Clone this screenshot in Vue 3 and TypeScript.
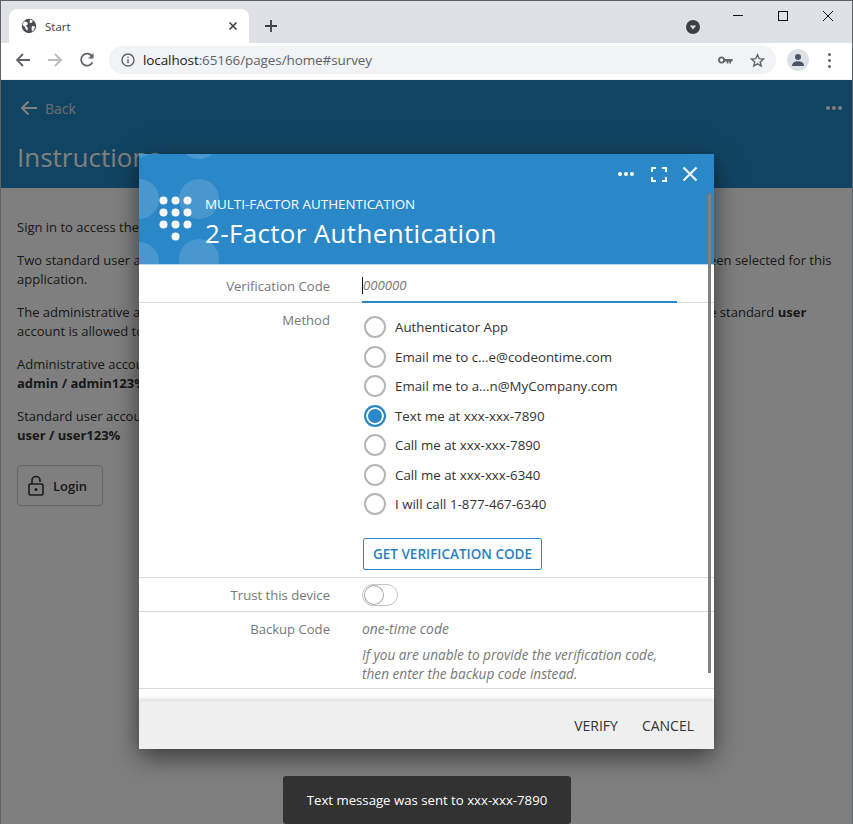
<script setup lang="ts">
const methods: { label: string; checked?: boolean }[] = [
  { label: 'Authenticator App' },
  { label: 'Email me to c...e@codeontime.com' },
  { label: 'Email me to a...n@MyCompany.com' },
  { label: 'Text me at xxx-xxx-7890', checked: true },
  { label: 'Call me at xxx-xxx-7890' },
  { label: 'Call me at xxx-xxx-6340' },
  { label: 'I will call 1-877-467-6340' },
]
</script>

<template>
  <div class="win">
    <div class="tabstrip">
      <div class="tab">
        <svg class="globe" width="16" height="16" viewBox="0 0 16 16">
          <circle cx="8" cy="8" r="7.2" fill="#4a4d51" />
          <path d="M3 3.5l3 .5 1 2-2 1.500 1.500 2 .5 3-2-1-1.500-3L1.500 7zM9 1.500l3 1.500-1.500 2-2-.5zM11 8l3 .5-1 3.500-2 1.500-.5-3z" fill="#fff" />
        </svg>
        <span class="tab-title">Start</span>
        <svg class="tab-x" width="10" height="10" viewBox="0 0 10 10"><path d="M1.500 1.500l7 7M8.500 1.500l-7 7" stroke="#3c4043" stroke-width="1.600" /></svg>
      </div>
      <svg class="plus" width="12" height="12" viewBox="0 0 12 12"><path d="M6 0v12M0 6h12" stroke="#3c4043" stroke-width="1.800" /></svg>
      <div class="strip-right">
        <svg class="drop" width="14" height="14" viewBox="0 0 14 14">
          <circle cx="7" cy="7" r="7" fill="#3c4043" />
          <path d="M3.800 5.400h6.400L7 9.400z" fill="#dee1e6" />
        </svg>
        <div class="winbtns">
          <svg width="12" height="12" viewBox="0 0 12 12"><path d="M1 5.500h10" stroke="#111" /></svg>
          <svg width="12" height="12" viewBox="0 0 12 12"><rect x="1.500" y="1.500" width="9" height="9" fill="none" stroke="#111" /></svg>
          <svg width="12" height="12" viewBox="0 0 12 12"><path d="M1 1l10 10M11 1L1 11" stroke="#111" /></svg>
        </div>
      </div>
    </div>
    <div class="toolbar">
      <svg class="nav" width="16" height="16" viewBox="0 0 16 16"><path d="M15 8H2M8 2L2 8l6 6" fill="none" stroke="#5f6368" stroke-width="1.800" /></svg>
      <svg class="nav" width="16" height="16" viewBox="0 0 16 16"><path d="M1 8h13M8 2l6 6-6 6" fill="none" stroke="#babcbe" stroke-width="1.800" /></svg>
      <svg class="nav" width="16" height="16" viewBox="0 0 16 16"><path d="M13.400 10.500A6 6 0 1 1 13 4.200" fill="none" stroke="#5f6368" stroke-width="1.800" /><path d="M14.500 1v5.400H9z" fill="#5f6368" /></svg>
      <div class="omnibox">
        <svg width="14" height="14" viewBox="0 0 14 14"><circle cx="7" cy="7" r="6" fill="none" stroke="#5f6368" stroke-width="1.400" /><path d="M7 6.200v4M7 3.700v1.400" stroke="#5f6368" stroke-width="1.400" /></svg>
        <span class="url"><span class="host">localhost</span>:65166/pages/home#survey</span>
        <svg class="key" width="15" height="9" viewBox="0 0 15 9"><circle cx="3.500" cy="4" r="2.600" fill="none" stroke="#5f6368" stroke-width="1.800" /><path d="M6 3h8.500v2.400h-1.500v2h-1.600v-2h-1v2H8.800v-2H6z" fill="#5f6368" /></svg>
        <svg class="star" width="15" height="15" viewBox="0 0 15 15"><path d="M7.500 1.800l1.700 3.900 4.200.4-3.200 2.800 1 4.100-3.700-2.200-3.700 2.200 1-4.100-3.200-2.800 4.200-.4z" fill="none" stroke="#5f6368" stroke-width="1.400" /></svg>
      </div>
      <div class="avatar">
        <svg width="14" height="14" viewBox="0 0 14 14"><circle cx="7" cy="4" r="3" fill="#4a5568" /><path d="M1 13c0-3.500 3-4.800 6-4.800s6 1.300 6 4.800z" fill="#4a5568" /></svg>
      </div>
      <div class="kebab"><i></i><i></i><i></i></div>
    </div>

    <div class="page">
      <div class="page-head">
        <div class="back">
          <svg width="18" height="16" viewBox="0 0 18 16"><path d="M17 8H2M8.500 1.500L2 8l6.500 6.500" fill="none" stroke="#fff" stroke-width="2" /></svg>
          <span>Back</span>
          <div class="more"><i></i><i></i><i></i></div>
        </div>
        <div class="page-title">Instructions</div>
      </div>
      <div class="page-body">
        <p>Sign in to access the application.</p>
        <p>Two standard user accounts and an administrative account were created and the multi-factor authentication has been selected for this application.</p>
        <p>The administrative account is allowed to use all of the authentication methods available in the application, while the standard <b>user</b> account is allowed to use only the authenticator app.</p>
        <p>Administrative account:<br /><b>admin / admin123%</b></p>
        <p>Standard user account:<br /><b>user / user123%</b></p>
        <button class="login">
          <svg width="18" height="22" viewBox="0 0 18 22"><path d="M5 9V5.500a4 4 0 0 1 8 0V7" fill="none" stroke="#333" stroke-width="1.600" /><rect x="2" y="9" width="14" height="11" rx="1.500" fill="none" stroke="#333" stroke-width="1.600" /><circle cx="9" cy="14.500" r="1.500" fill="#333" /></svg>
          <span>Login</span>
        </button>
      </div>
    </div>

    <div class="overlay"></div>

    <div class="modal">
      <div class="m-head">
        <svg class="m-bubbles" width="120" height="110" viewBox="0 0 120 110">
          <g fill="#fff" fill-opacity=".14">
            <circle cx="0" cy="45" r="20" />
            <circle cx="60" cy="45" r="20" />
            <circle cx="0" cy="108" r="20" />
            <circle cx="60" cy="105" r="20" />
            <circle cx="0" cy="-17" r="20" />
            <circle cx="60" cy="-15" r="20" />
          </g>
        </svg>
        <svg class="m-logo" width="34" height="46" viewBox="0 0 34 46">
          <g fill="#f4f6f8">
            <circle cx="4.500" cy="4.500" r="4" /><circle cx="16.500" cy="4.500" r="4" /><circle cx="28.500" cy="4.500" r="4" />
            <circle cx="4.500" cy="16.500" r="4" /><circle cx="16.500" cy="16.500" r="4" /><circle cx="28.500" cy="16.500" r="4" />
            <circle cx="4.500" cy="28.500" r="4" /><circle cx="16.500" cy="28.500" r="4" /><circle cx="28.500" cy="28.500" r="4" />
            <circle cx="16.500" cy="40.500" r="4" />
          </g>
        </svg>
        <div class="m-titles">
          <div class="m-sub">MULTI-FACTOR AUTHENTICATION</div>
          <div class="m-title">2-Factor Authentication</div>
        </div>
        <div class="m-tools">
          <div class="more white"><i></i><i></i><i></i></div>
          <svg width="16" height="15" viewBox="0 0 16 15"><path d="M1 5V1h4M11 1h4v4M15 10v4h-4M5 14H1v-4" fill="none" stroke="#fff" stroke-width="2" /></svg>
          <svg width="16" height="16" viewBox="0 0 16 16"><path d="M1.500 1.500l13 13M14.500 1.500l-13 13" stroke="#f4f6f8" stroke-width="2.200" /></svg>
        </div>
      </div>

      <div class="m-body">
        <div class="row row-code">
          <div class="lbl">Verification Code</div>
          <div class="val code-val"><span class="caret"></span><span class="ph">000000</span></div>
        </div>
        <div class="row row-method">
          <div class="lbl">Method</div>
          <div class="val">
            <div v-for="m in methods" :key="m.label" class="radio-row">
              <span class="radio" :class="{ on: m.checked }"></span>
              <span>{{ m.label }}</span>
            </div>
            <button class="get">GET VERIFICATION CODE</button>
          </div>
        </div>
        <div class="row row-trust">
          <div class="lbl">Trust this device</div>
          <div class="val"><span class="toggle"><span class="knob"></span></span></div>
        </div>
        <div class="row row-backup">
          <div class="lbl">Backup Code</div>
          <div class="val">
            <div class="ph backup-ph">one-time code</div>
            <div class="hint">If you are unable to provide the verification code,<br />then enter the backup code instead.</div>
          </div>
        </div>
        <div class="scrollbar"></div>
      </div>

      <div class="m-foot">
        <span>VERIFY</span>
        <span>CANCEL</span>
      </div>
    </div>

    <div class="toast">Text message was sent to xxx-xxx-7890</div>
  </div>
</template>

<style>
html, body { margin: 0; padding: 0; }
</style>

<style scoped>
* { box-sizing: border-box; }
.win {
  position: relative;
  width: 853px;
  height: 824px;
  overflow: hidden;
  font-family: "Open Sans", "Noto Sans", sans-serif;
  font-size: 13px;
  color: #333;
  background: #fff;
  border: 1px solid #5f6368;
  border-bottom: 0;
}
.tabstrip {
  height: 42px;
  background: #dee1e6;
  display: flex;
  align-items: flex-start;
  padding-top: 8px;
  padding-left: 8px;
}
.tab {
  width: 240px;
  height: 34px;
  background: #fff;
  border-radius: 8px 8px 0 0;
  display: flex;
  align-items: center;
  padding: 0 11px 0 12px;
  gap: 8px;
}
.tab-title { font-size: 11.500px; color: #3c4043; flex: 1; }
.plus { margin: 11px 0 0 16px; }
.strip-right {
  flex: 1;
  display: flex;
  justify-content: flex-end;
  position: relative;
}
.drop { margin: 11px 152px 0 0; }
.winbtns { position: absolute; right: 18px; top: 1px; display: flex; gap: 33px; }
.toolbar {
  height: 37px;
  background: #fff;
  display: flex;
  align-items: center;
  padding: 0 0 2px 14px;
  border-bottom: 1px solid #f1f3f4;
}
.nav { margin-right: 16px; }
.omnibox {
  width: 667px;
  height: 28px;
  margin-left: -2px;
  background: #f1f3f4;
  border-radius: 14px;
  display: flex;
  align-items: center;
  padding: 0 10px 0 12px;
}
.url { font-size: 13.500px; color: #5f6368; margin-left: 8px; flex: 1; letter-spacing: -.1px; }
.host { color: #202124; }
.star { margin-left: 17px; margin-right: 1px; }
.avatar {
  width: 22px;
  height: 22px;
  border-radius: 50%;
  background: #dee1e6;
  margin-left: 11px;
  display: flex;
  align-items: center;
  justify-content: center;
}
.kebab { margin-left: 19px; display: flex; flex-direction: column; gap: 3px; }
.kebab i { width: 3px; height: 3px; border-radius: 50%; background: #5f6368; display: block; }
.page { background: #fff; }
.page-head { height: 108px; background: #2389c4; color: #fff; padding: 17px 0 0 19px; }
.back { display: flex; align-items: center; gap: 7px; font-size: 14px; color: #ddd; height: 22px; }
.more { display: flex; gap: 2px; }
.more i { width: 4px; height: 4px; border-radius: 50%; background: #fff; display: block; }
.back .more { margin-left: auto; margin-right: 10px; }
.page-title { font-size: 26px; margin-top: 20px; margin-left: -3px; color: #fff; line-height: 36px; }
.page-body { padding: 30px 20px 0 16px; background: #fff; color: #333; line-height: 19px; font-size: 13px; }
.page-body p { margin: 0 0 14px; }
.login {
  display: flex;
  align-items: center;
  gap: 8px;
  width: 86px;
  height: 41px;
  margin-top: 20px;
  padding: 0 0 0 9px;
  background: #fff;
  border: 1px solid #ccc;
  border-radius: 4px;
  font: 600 13px "Open Sans", sans-serif;
  color: #333;
}
.overlay { position: absolute; inset: 79px 0 0 0; background: rgba(0, 0, 0, .5); }
.modal {
  position: absolute;
  left: 138px;
  top: 153px;
  width: 575px;
  height: 595px;
  background: #fff;
  box-shadow: 0 8px 24px rgba(0, 0, 0, .55);
  display: flex;
  flex-direction: column;
}
.m-head {
  position: relative;
  height: 111px;
  background: #2b88c8;
  flex: none;
  display: flex;
  align-items: flex-start;
  padding: 42px 0 0 20px;
  overflow: hidden;
  border-bottom: 1px solid #bcd9ee;
}
.m-bubbles { position: absolute; left: 0; top: 0; }
.m-logo { position: relative; flex: none; margin-top: 0; }
.m-titles { position: relative; margin-left: 12px; color: #fff; }
.m-sub { font-size: 13.400px; line-height: 16px; }
.m-title { font-size: 26px; line-height: 36px; margin-top: 3px; letter-spacing: .33px; }
.m-tools { position: absolute; right: 16px; top: 12px; display: flex; align-items: center; gap: 15px; }
.m-tools .more { margin-right: 2px; }
.m-body { position: relative; flex: 1; display: flex; flex-direction: column; min-height: 0; }
.row { display: flex; border-bottom: 1px solid #dcdcdc; }
.lbl { width: 191px; flex: none; text-align: right; color: #777; font-size: 13.100px; line-height: 18px; }
.val { margin-left: 32px; flex: 1; color: #333; }
.row-code { height: 38px; padding-top: 12px; }
.code-val { margin-right: 37px; height: 26px; border-bottom: 2px solid #2b88c8; position: relative; display: flex; align-items: flex-start; }
.caret { width: 1px; height: 17px; background: #111; }
.ph { font-style: italic; color: #777; font-size: 13.200px; line-height: 17px; }
.row-method { height: 275px; padding-top: 9.250px; }
.row-method .lbl { margin-top: -1.250px; }
.radio-row { display: flex; align-items: center; height: 29.500px; gap: 9px; margin-left: 2px; font-size: 13.300px; }
.radio {
  width: 22px;
  height: 22px;
  border-radius: 50%;
  border: 2px solid #b5b5b5;
  background: #fff;
  flex: none;
}
.radio.on { border-color: #2b88c8; box-shadow: inset 0 0 0 2px #fff; background: #2b88c8; }
.get {
  display: block;
  margin: 18.750px 0 0 1px;
  width: 179px;
  height: 32px;
  padding: 0;
  background: #fff;
  border: 1px solid #2b88c8;
  border-radius: 2px;
  color: #2b7fc0;
  font: 600 13.500px "Open Sans", sans-serif;
}
.row-trust { height: 34px; padding-top: 6px; }
.row-trust .lbl { margin-top: 2px; }
.toggle {
  display: block;
  width: 36px;
  height: 22px;
  border-radius: 11px;
  border: 1px solid #c4c4c4;
  position: relative;
}
.knob {
  position: absolute;
  left: 2px;
  top: 1px;
  width: 18px;
  height: 18px;
  border-radius: 50%;
  background: #fff;
  box-shadow: 0 0 0 1px #aaa;
}
.row-backup { height: 77px; padding-top: 8px; }
.backup-ph { line-height: 18px; font-size: 13.900px; }
.hint { font-style: italic; color: #777; font-size: 13.650px; line-height: 19px; margin-top: 7px; }
.scrollbar { position: absolute; right: 3px; top: -71px; width: 3px; height: 479px; background: #808080; }
.m-foot {
  height: 48px;
  flex: none;
  background: #efefef;
  box-shadow: 0 -2px 4px rgba(0, 0, 0, .14);
  display: flex;
  align-items: center;
  justify-content: flex-end;
  gap: 24px;
  padding-right: 20px;
  color: #333;
  font-size: 14px;
}
.toast {
  position: absolute;
  left: 282px;
  top: 775px;
  width: 288px;
  height: 48px;
  border-radius: 3px;
  background: #323232;
  color: #fff;
  font-size: 13.200px;
  display: flex;
  align-items: center;
  justify-content: center;
}
</style>
